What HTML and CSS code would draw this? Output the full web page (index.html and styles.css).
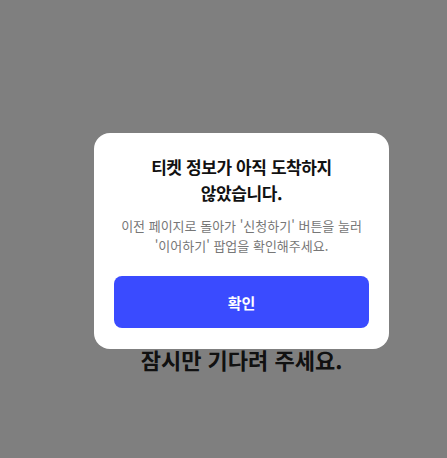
FILE: index.html
```html
<!DOCTYPE html>
<html lang="ko">
<head>
  <meta charset="UTF-8" />
  <meta name="viewport" content="width=device-width, initial-scale=1.0" />
  <title>티켓 확인</title>
  <link rel="stylesheet" href="styles.css">
</head>
<body>
  <div class="page">
    <p class="waiting">잠시만 기다려 주세요.</p>
  </div>

  <div class="overlay">
    <div class="modal">
      <h2 class="modal-title">티켓 정보가 아직 도착하지<br>않았습니다.</h2>
      <p class="modal-desc">이전 페이지로 돌아가 '신청하기' 버튼을 눌러<br>'이어하기' 팝업을 확인해주세요.</p>
      <button class="confirm-btn" type="button">확인</button>
    </div>
  </div>
</body>
</html>
```

FILE: styles.css
```css
:root {
  --primary: #3a4bff;
  --text: #111;
  --sub-text: #777;
}

* {
  box-sizing: border-box;
}

body {
  margin: 0;
  padding: 0;
  background: #fff;
  font-family: 'Noto Sans CJK KR', 'Noto Sans', sans-serif;
  height: 100vh;
  overflow: hidden;
}

.page {
  display: flex;
  flex-direction: column;
  align-items: center;
  padding: 344px 0 0 36px;
}

.waiting {
  margin: 0;
  font-size: 22px;
  font-weight: 700;
  line-height: 30px;
  color: #222;
}

.overlay {
  position: fixed;
  inset: 0;
  display: flex;
  justify-content: center;
  align-items: center;
  padding: 24px 0 0 36px;
  background: rgba(0, 0, 0, 0.5);
}

.modal {
  width: 295px;
  padding: 21px 20px;
  background: #fff;
  border-radius: 16px;
  text-align: center;
}

.modal-title {
  margin: 0;
  font-size: 17px;
  font-weight: 700;
  line-height: 26px;
  letter-spacing: -0.4px;
  color: var(--text);
}

.modal-desc {
  margin: 10px 0 0;
  font-size: 13px;
  line-height: 20px;
  color: var(--sub-text);
}

.confirm-btn {
  display: block;
  width: 100%;
  height: 52px;
  margin-top: 20px;
  border: none;
  border-radius: 8px;
  background: var(--primary);
  color: #fff;
  font-family: inherit;
  font-size: 15px;
  font-weight: 700;
  cursor: pointer;
}
```
